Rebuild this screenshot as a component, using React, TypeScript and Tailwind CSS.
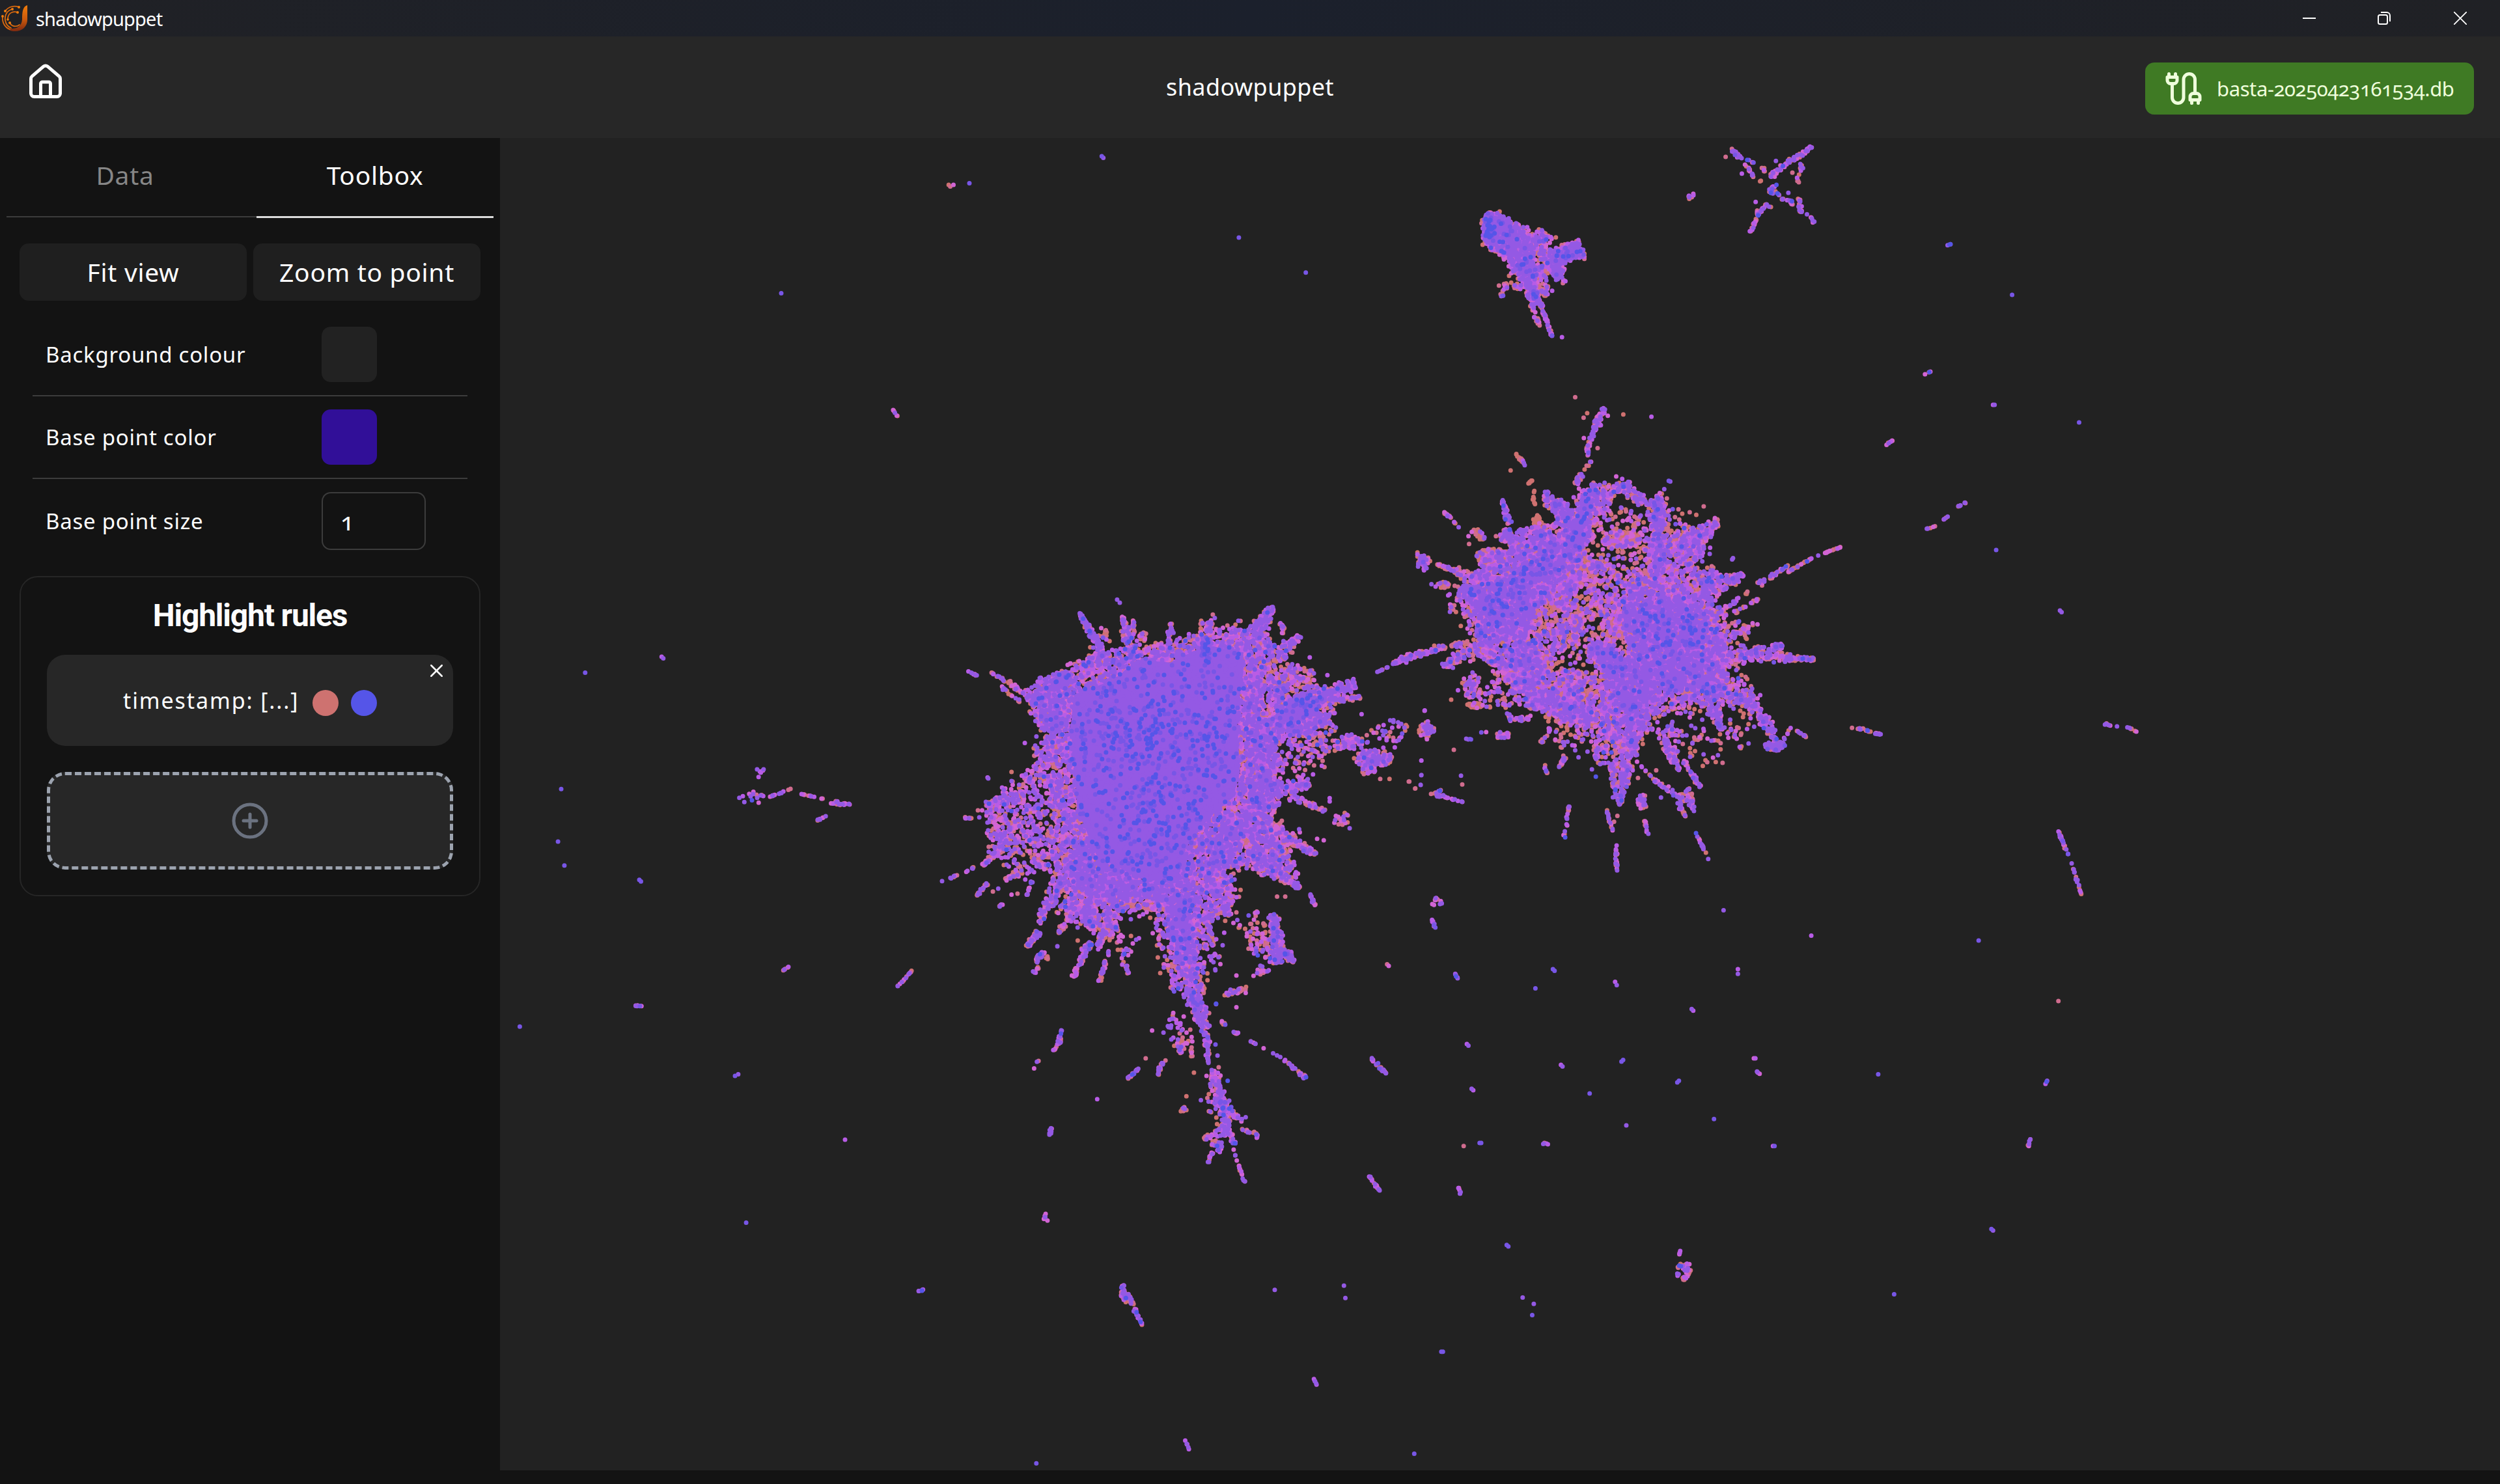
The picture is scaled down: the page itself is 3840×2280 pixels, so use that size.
import type { ReactNode } from "react";
import { House, CirclePlus, X } from "lucide-react";

/* ------------------------------------------------------------------ */
/* Embedding plot                                                      */
/* ------------------------------------------------------------------ */

const PLOT_X = 768;
const PLOT_Y = 212;
const PLOT_W = 3072;
const PLOT_H = 2047;

/** Timestamp ramp, oldest first; later layers are painted on top. */
const RAMP = ["#cf7170", "#d06c8e", "#d264d4", "#b85ce6", "#9459e4", "#7856e6", "#5555e8"];
const CUTS = [0.17, 0.38, 0.58, 0.75, 0.975, 0.988, 1];

/** x1, y1, x2, y2, half width at start, half width at end, density, bias */
type Streak = [number, number, number, number, number, number, number?, number?];
/** cx, cy, rx, ry, count, bias */
type Blob = [number, number, number, number, number, number?];
/** outline, count, jitter, bias */
type Region = [number[], number, number, number?];
/** x, y, layer */
type Dot = [number, number, number?];

interface Cluster {
  ox: number;
  oy: number;
  sx: number;
  sy: number;
  solids?: number[][];
  regions?: Region[];
  blobs?: Blob[];
  streaks?: Streak[];
  dots?: Dot[];
}

const CLUSTERS: Cluster[] = [
  {
    ox: 1420, oy: 880, sx: 1.96, sy: 2.6133,
    solids: [
      [450, 490, 570, 430, 640, 350, 740, 360, 850, 290, 960, 320, 960, 400, 940, 560, 950, 800, 930, 900, 860, 980, 790, 1090, 760, 1240, 640, 1220, 520, 1140, 460, 950, 450, 760, 440, 620],
      [1060, 560, 1150, 500, 1200, 570, 1080, 600],
    ],
    regions: [
      [[330, 500, 400, 420, 540, 320, 700, 310, 850, 250, 1000, 220, 1060, 300, 1050, 420, 1000, 540, 1180, 460, 1230, 600, 1060, 640, 1060, 800, 1060, 940, 960, 1000, 930, 1150, 810, 1220, 800, 1320, 700, 1330, 500, 1310, 400, 1200, 400, 900, 340, 760, 370, 640], 11500, 8],
      [[480, 460, 620, 400, 850, 360, 960, 420, 930, 700, 880, 980, 780, 1180, 560, 1180, 460, 900, 440, 640], 1700, 6, 7],
      [[460, 1080, 800, 1080, 800, 1310, 700, 1310, 520, 1290, 430, 1200], 1000, 6, 0.5],
      [[960, 480, 1060, 640, 1060, 940, 980, 960, 970, 700], 800, 6, -0.3],
      [[880, 980, 1040, 960, 1100, 1150, 1120, 1240, 960, 1170, 860, 1200], 1000, 6, -0.1],
      [[370, 780, 400, 1200, 280, 1200, 200, 1100, 190, 920, 290, 830], 560, 9, -0.05],
      [[400, 1200, 800, 1320, 720, 1380, 620, 1340, 560, 1450, 400, 1360], 620, 9, -0.1],
      [[800, 1200, 920, 1150, 940, 1320, 860, 1400, 800, 1400], 330, 8, -0.1],
      [[300, 480, 400, 420, 420, 640, 350, 620], 330, 6],
    ],
    blobs: [
      [845, 320, 15, 65, 70, 9], [1140, 530, 45, 45, 60, 9], [640, 640, 110, 130, 70, 40],
      [690, 930, 120, 120, 50, 40], [620, 340, 40, 60, 18, 20], [800, 700, 100, 120, 45, 40],
      [415, 425, 35, 30, 110, 1], [1110, 420, 70, 55, 110, -0.4], [1060, 460, 40, 50, 70, 0],
      [1180, 670, 100, 60, 110, -0.2], [1290, 680, 45, 35, 50, 0], [1350, 745, 60, 35, 150, -0.2],
      [1335, 790, 22, 22, 30, -0.4], [1410, 640, 50, 50, 22, 0], [1510, 635, 20, 42, 24, -0.3],
      [1130, 760, 80, 60, 50, 0], [1140, 840, 18, 28, 24, -0.2], [1255, 990, 24, 30, 18, -0.3],
      [700, 320, 40, 45, 60, -0.5], [910, 320, 30, 50, 60, -0.4], [545, 250, 25, 40, 12, -0.6],
      [650, 250, 22, 35, 16, -0.6], [1380, 670, 60, 60, 14, 0], [960, 1400, 60, 60, 10, 0],
      [1020, 1480, 40, 70, 34, -0.3], [720, 1450, 40, 70, 30, 0], [580, 1480, 70, 60, 34, 0],
      [990, 490, 30, 60, 60, -0.5], [870, 1500, 40, 60, 14, 0], [1075, 220, 10, 25, 14, -0.5],
      [1000, 1020, 50, 70, 90, -0.5], [400, 560, 30, 60, 60, -0.5], [400, 900, 20, 100, 60, -0.5],
    ],
    streaks: [
      [545, 340, 465, 160, 13, 3, 1.2, 1.5], [620, 310, 595, 172, 13, 4, 1.1], [740, 310, 740, 200, 9, 4, 1],
      [850, 300, 862, 190, 12, 7, 1.1], [832, 240, 834, 190, 4, 4, 1, -0.6], [990, 260, 1050, 135, 20, 5, 1.3, 0.6],
      [1060, 340, 1130, 255, 16, 6, 1.2], [630, 250, 628, 188, 4, 4, 0.8], [520, 330, 470, 390, 8, 8, 1],
      [350, 520, 200, 400, 9, 3, 0.6, -0.1], [130, 395, 158, 412, 3, 3, 1], [230, 460, 290, 520, 4, 4, 0.6, -0.2],
      [400, 440, 345, 430, 12, 6, 1, -0.1], [1060, 560, 1300, 445, 24, 9, 1.1, 0.8], [1180, 520, 1312, 500, 8, 6, 0.9],
      [1060, 630, 1220, 590, 20, 10, 1.2, 0.6], [1310, 430, 1410, 370, 2, 2, 0.3], [1410, 365, 1568, 293, 6, 7, 0.8],
      [1050, 870, 1160, 850, 18, 6, 1], [1100, 900, 1210, 955, 9, 5, 0.7], [1050, 1030, 1180, 1130, 16, 5, 1.1],
      [980, 1130, 1128, 1265, 22, 4, 1.1], [1160, 1290, 1176, 1335, 3, 3, 1], [850, 1200, 920, 1375, 20, 7, 0.9],
      [845, 1330, 862, 1460, 10, 4, 0.7], [760, 1290, 790, 1568, 24, 18, 1.4, 0.6], [410, 1230, 345, 1405, 16, 5, 0.9],
      [350, 1430, 308, 1500, 6, 5, 1], [490, 1300, 505, 1430, 24, 8, 1], [460, 1320, 405, 1450, 12, 4, 0.7],
      [560, 1340, 525, 1500, 12, 5, 0.7], [500, 1480, 468, 1568, 7, 5, 0.9, -0.4], [362, 1520, 335, 1560, 6, 5, 1],
      [250, 1070, 175, 1175, 11, 4, 0.8], [150, 1182, 125, 1200, 3, 3, 0.8, -0.5], [98, 1214, 50, 1240, 3, 3, 0.6],
      [200, 1232, 155, 1300, 4, 4, 1], [238, 1326, 225, 1340, 3, 3, 1], [322, 1240, 308, 1295, 4, 3, 1],
      [300, 900, 185, 925, 14, 7, 0.8, -0.1], [260, 1040, 190, 1060, 10, 6, 0.8], [300, 1200, 240, 1230, 9, 4, 0.8],
      [1048, 1370, 1068, 1568, 8, 15, 1.1], [1080, 1520, 1112, 1560, 8, 5, 1, 0.6], [120, 985, 142, 984, 4, 3, 1],
      [290, 810, 330, 840, 6, 6, 1], [335, 700, 345, 740, 7, 9, 1, -0.4], [1180, 650, 1100, 640, 8, 8, 0.8],
    ],
    dots: [
      [580, 108, 4], [588, 120, 4], [302, 683, 3], [192, 826, 4], [190, 822, 3], [262, 800, 0], [262, 836, 4],
      [165, 982, 4], [1213, 411, 3], [1160, 340, 3], [1506, 553, 3], [1316, 568, 3], [1496, 754, 3], [1496, 812, 4],
      [1494, 852, 4], [1458, 838, 1], [1477, 866, 1], [1372, 828, 1], [1400, 828, 0], [1525, 888, 1], [1548, 882, 4],
      [1552, 875, 6], [1562, 893, 4], [1220, 905, 3], [1220, 918, 3], [1280, 1026, 4], [1128, 1030, 4], [1130, 1042, 2],
      [1182, 1068, 2], [1202, 1074, 2], [1545, 1312, 1], [1552, 1330, 4], [1535, 1410, 4], [1538, 1424, 5], [874, 1530, 3],
      [868, 168, 1], [874, 182, 4], [400, 1500, 4], [262, 1292, 2], [280, 1288, 1], [206, 1280, 1], [222, 1268, 4],
    ],
  },
  {
    ox: 2150, oy: 580, sx: 2.178, sy: 2.0103,
    regions: [
      [[230, 620, 330, 560, 500, 540, 560, 450, 650, 340, 700, 380, 640, 470, 600, 580, 580, 690, 470, 720, 450, 800, 480, 950, 620, 1000, 690, 980, 700, 900, 780, 850, 730, 760, 760, 640, 830, 600, 840, 380, 880, 380, 890, 600, 900, 680, 1000, 700, 1060, 760, 1090, 900, 1090, 980, 1000, 1000, 860, 1030, 820, 1100, 770, 1150, 700, 1120, 640, 1060, 500, 1040, 420, 980, 300, 880, 220, 720], 6600, 8, -0.1],
      [[760, 720, 900, 680, 990, 740, 1040, 900, 1080, 970, 960, 960, 850, 960, 780, 1080, 690, 950, 690, 860, 770, 860], 2200, 6, 0.3],
      [[270, 650, 420, 570, 570, 550, 450, 700, 400, 800, 290, 780, 230, 680], 1000, 6, 0.3],
      [[640, 820, 720, 830, 730, 900, 690, 920, 640, 860], 260, 5, 0.6],
      [[400, 480, 480, 460, 560, 520, 480, 560, 340, 560], 420, 6, 0],
      [[900, 680, 1040, 640, 1090, 830, 1090, 900], 420, 8, -0.2],
    ],
    blobs: [
      [660, 700, 260, 320, 850, -0.3], [540, 770, 80, 80, 200, -0.4], [580, 950, 90, 50, 230, -0.4],
      [640, 650, 100, 100, 220, -0.3], [720, 770, 50, 40, 80, -0.6], [740, 500, 70, 26, 170, -0.7],
      [960, 520, 60, 60, 240, -0.2], [930, 630, 90, 70, 230, -0.3], [430, 900, 90, 80, 300, -0.3],
      [360, 490, 25, 22, 60, 0], [540, 410, 28, 35, 80, 0.5], [80, 572, 22, 24, 36, 0.8], [145, 640, 20, 10, 20, -0.7],
      [310, 552, 55, 25, 200, -0.75], [240, 950, 32, 40, 60, -0.2], [250, 1013, 28, 8, 36, -0.95], [90, 1090, 26, 22, 22, -0.3],
      [345, 1105, 26, 12, 26, 0], [1130, 1090, 60, 60, 30, -0.5], [1255, 1138, 34, 16, 60, 0.6], [812, 1310, 16, 24, 28, 0.4],
      [340, 980, 80, 50, 70, -0.2], [600, 1100, 100, 60, 60, -0.2], [960, 1080, 60, 60, 26, 0], [1020, 1150, 60, 50, 20, -0.3],
      [880, 740, 25, 25, 22, 20], [980, 760, 25, 35, 32, 20], [890, 810, 20, 20, 18, 20], [320, 710, 50, 50, 22, 20],
      [470, 590, 70, 50, 26, 20], [275, 790, 25, 14, 24, 8], [1030, 960, 26, 20, 22, 20], [970, 820, 18, 18, 12, 20],
      [230, 660, 30, 20, 34, 4], [550, 500, 80, 60, 150, -0.1], [900, 440, 60, 40, 24, -0.5], [1120, 800, 50, 50, 36, -0.3],
      [690, 1150, 50, 50, 50, -0.1], [470, 1000, 60, 30, 80, 0.2], [900, 1100, 40, 40, 30, 0.4], [780, 1060, 60, 60, 24, 6],
      [185, 680, 30, 45, 20, -0.2], [1130, 930, 60, 60, 26, -0.2], [860, 560, 200, 140, 130, -0.4],
      [450, 880, 60, 60, 160, -0.6], [560, 1040, 80, 40, 80, -0.3], [1080, 860, 20, 80, 60, -0.5],
    ],
    streaks: [
      [640, 350, 750, 335, 14, 14, 0.6, -0.1], [690, 380, 750, 330, 10, 7, 1.1], [750, 335, 815, 380, 13, 10, 1, 0], [800, 380, 870, 380, 7, 6, 0.8],
      [650, 345, 565, 560, 13, 18, 1.3, 0.4], [865, 365, 872, 600, 9, 14, 1.4, 0.4], [960, 520, 1068, 445, 20, 8, 1.2],
      [1000, 660, 1150, 610, 22, 6, 1.1, 0.3], [1060, 600, 1030, 640, 14, 16, 1, 0.4], [1060, 735, 1165, 660, 5, 4, 0.6, -0.2],
      [1080, 745, 1208, 680, 4, 4, 0.4, -0.4], [1100, 800, 1200, 758, 6, 5, 0.7], [1200, 640, 1300, 580, 6, 4, 0.9],
      [1300, 600, 1375, 560, 3, 3, 1.3, -0.6], [1378, 558, 1372, 562, 2, 2, 1, 0.5], [1420, 543, 1475, 523, 3, 3, 1.1],
      [1120, 860, 1280, 828, 12, 6, 1], [1140, 855, 1385, 870, 13, 4, 1.2], [1090, 870, 1150, 860, 12, 12, 0.7, -0.2],
      [1060, 960, 1200, 1010, 24, 15, 1.1], [1190, 1010, 1258, 1120, 11, 7, 1.2, 0.6], [1275, 1135, 1310, 1080, 4, 3, 0.6],
      [1325, 1090, 1366, 1112, 3, 3, 1], [1030, 980, 1080, 1090, 18, 5, 1.3, 0.5], [888, 1110, 905, 1190, 8, 5, 1.2, 0.4],
      [912, 1140, 935, 1215, 8, 4, 1], [948, 1185, 1010, 1270, 5, 4, 1, 0.3], [800, 1195, 850, 1240, 3, 3, 0.4, -0.3],
      [850, 1245, 960, 1310, 5, 6, 0.9], [965, 1270, 982, 1340, 9, 4, 0.9], [930, 1310, 960, 1365, 5, 4, 0.9],
      [990, 1403, 1035, 1490, 3, 3, 0.7, 0.4], [820, 1370, 828, 1410, 3, 5, 0.9], [770, 1110, 735, 1320, 22, 4, 1.3],
      [712, 1200, 725, 1310, 8, 6, 0.8, -0.1], [690, 1330, 712, 1400, 3, 3, 0.8], [724, 1440, 726, 1528, 3, 4, 0.9],
      [567, 1315, 550, 1420, 3, 4, 0.6], [558, 1165, 535, 1205, 5, 4, 1], [485, 1198, 495, 1222, 4, 4, 1], [505, 1080, 478, 1128, 4, 5, 0.7],
      [660, 1120, 665, 1195, 9, 7, 0.8], [365, 1055, 440, 1050, 6, 5, 0.8], [360, 1035, 375, 1060, 5, 5, 0.7],
      [230, 815, 110, 845, 8, 3, 0.7, -0.2], [110, 845, 0, 868, 5, 7, 0.8, 0.3], [300, 820, 145, 890, 18, 7, 1],
      [260, 620, 125, 578, 12, 3, 0.9, -0.2], [55, 540, 75, 560, 3, 6, 0.9], [245, 468, 285, 500, 7, 7, 1.3, -0.8],
      [145, 412, 172, 435, 4, 4, 1], [180, 448, 200, 464, 3, 3, 0.8, -0.5], [343, 378, 358, 430, 5, 6, 1.2, 1], [355, 430, 372, 450, 8, 7, 1],
      [460, 425, 465, 470, 8, 8, 1.3, -0.95], [487, 350, 492, 385, 7, 7, 1, 0.6], [500, 375, 600, 480, 12, 20, 0.7],
      [444, 315, 428, 330, 3, 3, 1, -0.9], [450, 345, 450, 392, 4, 4, 0.5, -0.9], [385, 235, 410, 258, 4, 4, 1.2, -0.85], [405, 250, 420, 274, 4, 3, 1.2, -0.7],
      [683, 95, 655, 150, 6, 7, 1.3], [655, 150, 638, 190, 6, 6, 1.3, 0.6], [635, 195, 625, 240, 5, 6, 0.8, -0.3],
      [640, 258, 612, 285, 4, 4, 0.5, -0.6], [608, 295, 588, 340, 6, 9, 0.9, -0.1], [655, 330, 650, 360, 12, 14, 1, 0.5],
      [105, 1285, 210, 1310, 4, 3, 0.7, 0.3], [120, 1283, 140, 1276, 5, 5, 1, 1.5], [220, 1115, 240, 1118, 4, 2, 0.8, 1],
      [490, 990, 640, 1060, 14, 18, 0.9], [420, 480, 400, 470, 8, 8, 1],
    ],
    dots: [
      [587, 61, 1], [748, 114, 0], [842, 121, 3], [905, 321, 4], [900, 319, 5], [885, 345, 4], [1017, 398, 1], [627, 110, 0], [615, 124, 1],
      [696, 118, 2], [616, 187, 2], [662, 218, 1], [371, 287, 0], [1115, 558, 4], [1112, 562, 4], [1037, 545, 4], [1400, 550, 4],
      [83, 1029, 2], [24, 1078, 0], [181, 1150, 1], [72, 1183, 3], [72, 1228, 4], [70, 1258, 4], [205, 1230, 4], [209, 1257, 1],
      [32, 1248, 1], [52, 1269, 1], [5, 1070, 4], [5, 1110, 3], [273, 1096, 5], [289, 1095, 2], [598, 1173, 4], [656, 1233, 6],
      [643, 1210, 4], [1513, 1082, 1], [1550, 1084, 1], [1560, 1090, 1], [797, 1237, 1], [858, 1213, 1], [728, 1354, 1], [717, 1372, 1],
      [1080, 1190, 1], [1048, 1174, 2], [172, 995, 0], [195, 966, 3], [168, 724, 4], [106, 638, 4], [120, 646, 3], [162, 673, 3],
      [582, 370, 3], [601, 371, 2], [230, 490, 2], [232, 514, 1], [322, 490, 1], [970, 416, 1], [992, 424, 0], [874, 1297, 4],
    ],
  },
  {
    ox: 1400, oy: 1350, sx: 2.24, sy: 2.178,
    blobs: [
      [880, 250, 45, 80, 36, 0], [1000, 180, 60, 60, 40, -0.1], [1040, 270, 30, 40, 10, 0], [1190, 200, 40, 70, 26, -0.3],
      [930, 490, 60, 50, 26, 0.2], [1200, 310, 30, 25, 16, 0.2], [1045, 740, 30, 60, 20, -0.2], [1050, 860, 30, 40, 22, 0],
      [730, 270, 20, 50, 10, 0], [1000, 330, 20, 60, 26, -0.5], [910, 350, 22, 30, 26, 0], [940, 550, 30, 20, 14, -0.2],
    ],
    streaks: [
      [925, 60, 930, 200, 28, 22, 1.5, 0.4], [930, 190, 960, 340, 22, 18, 1.4, 0.4], [950, 340, 1010, 500, 19, 9, 1.4, 0.6],
      [1010, 490, 1022, 620, 8, 4, 1, 0.2], [1035, 640, 1070, 760, 11, 10, 1.2, 0.6], [1070, 740, 1085, 860, 11, 10, 1.3, 0.6],
      [960, 380, 990, 470, 4, 4, 0.6, 8], [1060, 700, 1078, 810, 3, 3, 0.6, 9],
      [1100, 780, 1140, 820, 8, 5, 0.8], [1135, 835, 1195, 862, 3, 5, 0.9], [1095, 850, 1112, 890, 6, 6, 1], [1108, 905, 1120, 945, 2, 2, 0.5],
      [1126, 960, 1145, 1015, 3, 4, 0.9], [1065, 880, 1055, 920, 8, 5, 1.1], [1035, 915, 1020, 950, 4, 4, 1], [1015, 855, 1012, 875, 5, 5, 1],
      [1248, 120, 1262, 280, 7, 15, 1.2, 0.2], [1275, 240, 1318, 275, 10, 6, 1, 0.6], [1075, 385, 1155, 370, 5, 9, 0.9],
      [1065, 475, 1082, 492, 3, 3, 0.8, -0.3], [1108, 514, 1140, 524, 3, 3, 0.8, 0.2], [1165, 543, 1275, 600, 2, 2, 0.4, -0.1],
      [1280, 605, 1358, 668, 4, 4, 1, 0.2], [615, 210, 558, 330, 5, 5, 1.1, -0.1], [585, 235, 620, 230, 6, 4, 0.9, -0.7],
      [668, 275, 645, 345, 4, 5, 1.1], [650, 185, 642, 230, 5, 5, 1.2, 0.4], [450, 245, 425, 280, 5, 4, 1], [435, 295, 420, 318, 4, 4, 1, 0.5],
      [465, 262, 472, 268, 5, 5, 1, -0.7], [440, 180, 400, 222, 5, 6, 1], [740, 290, 745, 318, 3, 5, 0.9], [513, 505, 510, 545, 4, 5, 1, 0.7],
      [512, 545, 490, 575, 4, 4, 1.1, 0.1], [440, 608, 430, 614, 3, 2, 0.8], [790, 628, 745, 668, 3, 4, 1.2, 0.1], [862, 615, 848, 655, 4, 5, 1.1, 0.6],
      [965, 560, 962, 595, 3, 4, 1], [928, 555, 925, 585, 4, 5, 1], [950, 760, 928, 782, 5, 6, 1], [482, 830, 475, 858, 4, 4, 1, 0.7],
      [460, 1120, 458, 1142, 3, 4, 1, 0.6], [725, 1358, 742, 1410, 6, 8, 1.1, 1], [742, 1390, 795, 1495, 5, 3, 1.3, 0.3],
      [715, 1380, 738, 1420, 5, 4, 0.8, -0.6],
    ],
    dots: [
      [422, 635, 2], [639, 738, 3], [828, 508, 2], [806, 601, 1], [874, 608, 1], [882, 493, 4], [885, 497, 4], [867, 515, 4], [894, 538, 4],
      [902, 468, 3], [904, 559, 0], [972, 649, 0], [1048, 420, 4], [1048, 418, 6], [1118, 324, 2], [1118, 430, 2], [1088, 676, 6], [1046, 555, 5],
      [1053, 592, 4], [1057, 631, 1], [996, 741, 4], [1018, 734, 1], [946, 728, 0], [1150, 798, 4], [1488, 1362, 4], [1493, 1403, 4],
      [1250, 1376, 4], [36, 1378, 4], [36, 1379, 6], [468, 1144, 2], [1374, 60, 3], [1378, 78, 4], [1388, 88, 2], [1286, 60, 1], [1258, 60, 1],
      [1160, 123, 5], [1188, 110, 1], [1126, 164, 0], [1148, 168, 0], [1076, 181, 3], [572, 207, 0], [502, 226, 4], [678, 243, 3], [773, 204, 4],
    ],
  },
  {
    ox: 2200, oy: 200, sx: 2.45, sy: 3,
    regions: [
      [[195, 420, 210, 388, 245, 388, 340, 460, 370, 560, 380, 700, 405, 790, 375, 800, 335, 680, 270, 580, 205, 530], 1250, 4, 0.2],
      [[198, 410, 225, 400, 235, 470, 220, 510, 200, 490], 110, 2, 12],
      [[440, 560, 540, 520, 570, 570, 500, 610, 480, 690, 450, 660], 330, 3, 0.5],
      [[340, 470, 430, 480, 450, 560, 430, 700, 380, 700], 230, 5, -0.2],
    ],
    blobs: [[400, 490, 38, 26, 50, 0], [250, 450, 60, 60, 20, 6], [350, 620, 30, 50, 20, 8], [490, 570, 28, 22, 22, 8], [415, 740, 25, 35, 26, -0.1], [310, 470, 50, 40, 60, -0.5]],
    streaks: [
      [385, 700, 392, 800, 8, 7, 1.3, 0.5], [370, 800, 400, 895, 5, 4, 1, -0.3], [408, 800, 450, 950, 5, 3, 1.3, 0.4], [545, 505, 550, 580, 5, 6, 1.1],
      [570, 570, 580, 590, 5, 5, 1, 0.6], [340, 720, 305, 720, 7, 4, 1, -0.5], [465, 620, 470, 690, 8, 5, 1.2, 0.5], [495, 690, 500, 705, 5, 5, 1, 0.5],
      [300, 640, 318, 680, 3, 3, 0.7, -0.5], [285, 710, 252, 775, 6, 4, 0.8, -0.4], [1125, 85, 1165, 135, 5, 5, 1.1, 0.4], [1190, 140, 1210, 150, 4, 3, 0.8],
      [1178, 155, 1208, 215, 4, 3, 1], [1430, 75, 1355, 140, 4, 6, 1.2, 0.4], [1355, 135, 1290, 195, 6, 5, 1.1], [1285, 195, 1275, 230, 8, 5, 1, -0.1],
      [1385, 150, 1385, 175, 4, 3, 0.8], [1290, 240, 1275, 290, 6, 6, 1, 0.3], [1290, 280, 1306, 302, 3, 3, 0.9], [1240, 168, 1252, 190, 4, 4, 1, -0.7],
      [1235, 228, 1232, 242, 3, 3, 1, -0.9], [1315, 318, 1345, 325, 3, 4, 0.9, -0.3], [1350, 320, 1355, 350, 5, 4, 0.9], [1380, 315, 1388, 380, 4, 5, 1.1, 0.2],
      [1425, 400, 1437, 425, 3, 4, 1], [1250, 340, 1275, 355, 3, 3, 1], [1250, 350, 1225, 395, 4, 4, 1.1], [1222, 360, 1224, 390, 3, 3, 0.7],
      [1220, 410, 1198, 472, 3, 4, 1.1, 0], [963, 310, 992, 295, 4, 4, 0.9, 0], [1372, 220, 1380, 250, 3, 3, 0.9],
    ],
    dots: [
      [1104, 123, 1], [1165, 200, 3], [1185, 137, 6], [1293, 142, 4], [1355, 196, 1], [1380, 205, 0], [1395, 175, 4], [1387, 187, 3], [1217, 331, 3],
      [1340, 289, 4], [1410, 388, 4], [488, 954, 3], [451, 740, 3], [434, 756, 3], [251, 716, 1], [270, 709, 1], [297, 703, 0], [289, 671, 0], [404, 900, 1], [465, 494, 0],
    ],
  },
  {
    ox: 0, oy: 0, sx: 1 / 2.449, sy: 1 / 2.449,
    blobs: [[1056, 797, 5, 6, 34, 0.4], [477, 484, 4, 4, 6, 0.8], [472, 500, 9, 4, 14, 0.4], [902, 566, 4, 3, 8, 0.5]],
    streaks: [
      [483, 500, 496, 495, 3, 3, 0.7, 0.3], [502, 498, 534, 505, 2, 3, 0.6, 0.1], [520, 504, 533, 505, 3, 3, 0.8, 0.4], [512, 515, 518, 512, 3, 2, 0.9],
      [563, 619, 572, 609, 3, 3, 0.9, 0], [1290, 519, 1297, 536, 3, 3, 1.1, 0.5], [1299, 541, 1306, 563, 3, 3, 0.6, -0.1],
      [1162, 456, 1180, 461, 3, 3, 0.9, -0.3], [1320, 454, 1328, 456, 3, 3, 0.6, 0.4], [1334, 456, 1340, 459, 3, 2, 0.9, 0],
      [1208, 332, 1214, 330, 3, 2, 0.8, 0.4], [1228, 318, 1233, 315, 3, 3, 1, 0], [1219, 326, 1223, 323, 2, 2, 0.7, 0.3],
      [859, 738, 866, 748, 3, 4, 1, 0.3], [860, 664, 870, 674, 4, 4, 1, 0.5], [1183, 279, 1187, 276, 3, 3, 1, 0.3],
      [560, 257, 563, 261, 2, 3, 1, 0.5], [491, 609, 495, 606, 2, 3, 1, 1], [1272, 719, 1274, 713, 3, 2, 1, 0.3], [1282, 681, 1284, 678, 3, 2, 1, 0.3],
      [898, 577, 900, 582, 3, 3, 1, 1.5], [912, 610, 915, 615, 3, 2, 0.9, 0.5], [824, 865, 826, 869, 2, 3, 1, 0.8], [743, 903, 746, 909, 2, 3, 0.8, 1],
      [398, 631, 403, 631, 3, 3, 1, 1.5], [1207, 235, 1211, 233, 2, 2, 0.9, 0.5], [1221, 154, 1224, 153, 2, 2, 1, 0.5],
      [1053, 788, 1054, 784, 2, 2, 0.9, -0.2], [967, 717, 971, 718, 3, 3, 0.9, 1], [915, 745, 916, 749, 3, 3, 1, 1],
      [576, 810, 579, 809, 2, 2, 1, 1.5], [1102, 672, 1104, 674, 3, 2, 1, 0.5],
    ],
    dots: [
      [691, 98, 5], [692, 99, 4], [595, 116, 0], [598, 116, 2], [596, 117, 1], [608, 115, 5], [777, 149, 5], [819, 171, 5], [490, 184, 5], [1262, 185, 5],
      [1250, 254, 3], [1251, 254, 4], [1304, 265, 5], [1252, 345, 5], [1292, 383, 4], [1293, 384, 4], [415, 412, 3], [416, 413, 4], [367, 422, 5],
      [352, 495, 5], [350, 528, 5], [354, 543, 5], [401, 552, 5], [402, 553, 5], [326, 644, 5], [461, 675, 5], [463, 674, 4], [530, 715, 3],
      [468, 767, 5], [650, 918, 5], [887, 912, 5], [905, 848, 5], [904, 848, 5], [1081, 571, 4], [1136, 587, 3], [1241, 590, 5], [1291, 628, 1],
      [870, 605, 1], [871, 606, 2], [974, 608, 5], [975, 609, 5], [963, 620, 5], [1013, 616, 3], [1014, 618, 4], [1061, 633, 4], [1062, 634, 3],
      [1090, 608, 3], [1090, 611, 4], [920, 655, 3], [921, 656, 4], [979, 668, 3], [980, 669, 4], [1018, 665, 5], [1017, 666, 5], [997, 686, 5],
      [1053, 678, 5], [1052, 679, 5], [1100, 664, 2], [1101, 664, 3], [923, 683, 4], [924, 684, 3], [1020, 706, 4], [1075, 702, 5], [928, 717, 5],
      [929, 717, 5], [918, 719, 1], [1112, 719, 3], [1113, 719, 5], [1178, 674, 5], [1249, 771, 5], [1250, 772, 4], [1188, 812, 5], [945, 781, 5],
      [946, 782, 5], [955, 814, 4], [962, 818, 4], [961, 825, 5], [1054, 793, 0], [1060, 797, 1], [1052, 799, 4],
    ],
  },
];

/** Small seeded generator so that the plot is stable between renders. */
function seeded(seed: number) {
  let a = seed;
  return () => {
    a = (a + 0x6d2b79f5) | 0;
    let t = Math.imul(a ^ (a >>> 15), 1 | a);
    t = (t + Math.imul(t ^ (t >>> 7), 61 | t)) ^ t;
    return ((t ^ (t >>> 14)) >>> 0) / 4294967296;
  };
}

function inside(poly: number[], x: number, y: number) {
  let hit = false;
  for (let i = 0, j = poly.length - 2; i < poly.length; j = i, i += 2) {
    const xi = poly[i], yi = poly[i + 1], xj = poly[j], yj = poly[j + 1];
    if (yi > y !== yj > y && x < ((xj - xi) * (y - yi)) / (yj - yi) + xi) hit = !hit;
  }
  return hit;
}

function buildPlot() {
  const rand = seeded(20250423);
  const gauss = () => rand() + rand() + rand() - 1.5;
  const layers: string[][] = RAMP.map(() => []);
  const solids: string[] = [];

  const layerFor = (bias: number) => {
    const t = Math.pow(rand(), 1 / (1 + bias));
    const i = CUTS.findIndex((c) => t <= c);
    return i < 0 ? RAMP.length - 1 : i;
  };
  const put = (x: number, y: number, layer: number) => {
    layers[layer].push(`M${(x - PLOT_X).toFixed(1)} ${(y - PLOT_Y).toFixed(1)}h0`);
  };

  for (const c of CLUSTERS) {
    const X0 = (x: number) => c.ox + x / c.sx;
    const Y0 = (y: number) => c.oy + y / c.sy;
    for (const poly of c.solids ?? []) {
      const pts: string[] = [];
      for (let i = 0; i < poly.length; i += 2) pts.push(`${(X0(poly[i]) - PLOT_X).toFixed(1)} ${(Y0(poly[i + 1]) - PLOT_Y).toFixed(1)}`);
      solids.push(`M${pts.join("L")}Z`);
    }
    for (const [poly, count, jitter, bias = 0] of c.regions ?? []) {
      const xs = poly.filter((_, i) => i % 2 === 0);
      const ys = poly.filter((_, i) => i % 2 === 1);
      const x0 = Math.min(...xs), x1 = Math.max(...xs), y0 = Math.min(...ys), y1 = Math.max(...ys);
      let left = count;
      while (left > 0) {
        const x = x0 + rand() * (x1 - x0), y = y0 + rand() * (y1 - y0);
        if (!inside(poly, x, y)) continue;
        put(X0(x) + gauss() * jitter * 1.6, Y0(y) + gauss() * jitter * 1.6, layerFor(bias));
        left--;
      }
    }
    for (const [cx, cy, rx, ry, count, bias = 0] of c.blobs ?? []) {
      for (let i = 0; i < count; i++) {
        const a = rand() * Math.PI * 2, r = Math.pow(rand(), 0.6);
        put(X0(cx + Math.cos(a) * r * rx), Y0(cy + Math.sin(a) * r * ry), layerFor(bias));
      }
    }
    for (const [ax, ay, bx, by, w1, w2, density = 1, bias = 0] of c.streaks ?? []) {
      const x1 = X0(ax), y1 = Y0(ay), x2 = X0(bx), y2 = Y0(by);
      const len = Math.hypot(x2 - x1, y2 - y1) || 1;
      const nx = -(y2 - y1) / len, ny = (x2 - x1) / len;
      const count = Math.ceil((len * (3 + w1 + w2) * density) / 18);
      for (let i = 0; i < count; i++) {
        const t = rand();
        const off = gauss() * 1.05 * Math.max(0, w1 + (w2 - w1) * t - 2);
        put(x1 + (x2 - x1) * t + nx * off, y1 + (y2 - y1) * t + ny * off, layerFor(bias));
      }
    }
    for (const [x, y, layer = 4] of c.dots ?? []) put(X0(x), Y0(y), layer);
  }
  return { layers: layers.map((l) => l.join("")), solid: solids.join("") };
}

const PLOT = buildPlot();

function EmbeddingPlot() {
  return (
    <svg className="block h-full w-full" viewBox={`0 0 ${PLOT_W} ${PLOT_H}`} fill="none" strokeLinecap="round" strokeWidth={7}>
      {RAMP.map((color, i) => (
        <g key={color}>
          {i === 4 && <path d={PLOT.solid} fill={color} />}
          <path d={PLOT.layers[i]} stroke={color} />
        </g>
      ))}
    </svg>
  );
}

/* ------------------------------------------------------------------ */
/* Icons                                                               */
/* ------------------------------------------------------------------ */

function AppLogo() {
  return (
    <svg className="size-10" viewBox="0 0 40 40" fill="none">
      <defs>
        <linearGradient id="ember" x1="0" y1="0" x2="0" y2="1">
          <stop offset="0" stopColor="#f07c0c" />
          <stop offset="0.55" stopColor="#c9580c" />
          <stop offset="1" stopColor="#7e2a10" />
        </linearGradient>
      </defs>
      <path d="M40 0v22c0 11-8 18-19 18-6 0-11-2-14-6 9 4 24 3 25-12C32 10 33 2 40 0Z" fill="url(#ember)" />
      <g stroke="#d9690f" strokeWidth="1.8" strokeLinecap="round">
        <path d="M6 9C11 2 20 0 27 3" />
        <path d="M17 6C9 8 5 15 6 23c1 6 4 10 9 12" />
        <path d="M25 11c-8-3-15 2-15 10" />
        <path d="M2 17c-1 9 3 17 11 20" />
        <path d="M13 27c3 6 10 7 15 3" />
      </g>
      <g fill="#f07c0c">
        <circle cx="6" cy="9" r="2" />
        <circle cx="27" cy="3" r="2" />
        <circle cx="17" cy="6" r="2" />
        <circle cx="25" cy="11" r="2" />
        <circle cx="2" cy="17" r="2" />
        <circle cx="10" cy="22" r="1.8" />
        <circle cx="13" cy="27" r="2" />
      </g>
    </svg>
  );
}

function CableIcon() {
  return (
    <svg className="size-[60px]" viewBox="0 0 24 24" fill="none" stroke="currentColor" strokeWidth="2" strokeLinecap="round" strokeLinejoin="round">
      <path d="M4 9a2 2 0 0 1-2-2V5h6v2a2 2 0 0 1-2 2Z" />
      <path d="M3 5V3" />
      <path d="M7 5V3" />
      <path d="M19 15V6.5a3.5 3.5 0 0 0-7 0v11a3.5 3.5 0 0 1-7 0V9" />
      <path d="M17 21v-2" />
      <path d="M21 21v-2" />
      <path d="M22 19h-6v-2a2 2 0 0 1 2-2h2a2 2 0 0 1 2 2Z" />
    </svg>
  );
}

/* ------------------------------------------------------------------ */
/* Chrome                                                              */
/* ------------------------------------------------------------------ */

function TitleBar() {
  return (
    <div className="flex h-14 items-center justify-between bg-linear-to-r from-[#202125] via-[#1b202c] to-[#202125]">
      <div className="flex items-center pl-0.5">
        <AppLogo />
        <span className="mt-0.5 ml-[13px] text-[29px] leading-[40px] tracking-[-0.8px] text-white">shadowpuppet</span>
      </div>
      <div className="flex items-center gap-[95px] pr-[51px] text-white">
        <svg className="size-5" viewBox="0 0 20 20" stroke="currentColor" strokeWidth="2">
          <path d="M0 10h20" />
        </svg>
        <svg className="size-5" viewBox="0 0 20 20" fill="none" stroke="currentColor" strokeWidth="2">
          <rect x="1" y="5" width="14" height="14" rx="2.5" />
          <path d="M5 1h9a5 5 0 0 1 5 5v9" />
        </svg>
        <svg className="ml-0.5 size-5" viewBox="0 0 20 20" stroke="currentColor" strokeWidth="1.8">
          <path d="M0 0l20 20M20 0L0 20" />
        </svg>
      </div>
    </div>
  );
}

function Header() {
  return (
    <header className="grid h-[156px] grid-cols-3 items-center bg-[#272727]">
      <div className="-mt-4 pl-10">
        <House className="size-[60px] text-white" strokeWidth={2} />
      </div>
      <h1 className="text-center text-[36px] leading-[48px] tracking-[0.4px] text-white">shadowpuppet</h1>
      <button className="mt-1 mr-10 flex h-20 w-[505px] items-center justify-self-end rounded-[14px] bg-[#3f7a24] pl-[29px] text-[#efffdc]">
        <CableIcon />
        <span className="ml-[21px] text-[31px] leading-none tracking-[-0.4px] whitespace-nowrap oldstyle-nums">basta-20250423161534.db</span>
      </button>
    </header>
  );
}

/* ------------------------------------------------------------------ */
/* Sidebar                                                             */
/* ------------------------------------------------------------------ */

function Setting({ label, children, last }: { label: string; children: ReactNode; last?: boolean }) {
  return (
    <div className={last ? "flex items-start py-5 pl-5" : "flex items-start border-b-2 border-[#3c3c3c] py-5 pl-5"}>
      <span className={last ? "w-[424px] pt-[22px] text-[33px] leading-[46px] tracking-[0.75px] text-white" : "w-[424px] pt-5 text-[33px] leading-[46px] tracking-[0.75px] text-white"}>
        {label}
      </span>
      {children}
    </div>
  );
}

function Sidebar() {
  return (
    <aside className="w-[768px] shrink-0">
      <div className="mx-2.5 flex h-[123px] text-[39px] leading-[52px] tracking-[0.7px]">
        <div className="flex h-[122px] w-[384px] justify-center border-b-2 border-[#3c3c3c] pt-[31px] pr-5 text-[#868686]">Data</div>
        <div className="flex w-[364px] justify-center border-b-3 border-[#dcdcdc] pt-[31px] text-white">Toolbox</div>
      </div>

      <div className="mx-[30px] mt-[39px] flex gap-2.5 text-[39px] tracking-[0.7px] text-white">
        <button className="h-[88px] flex-1 rounded-[14px] bg-[#1f1f1f]">Fit view</button>
        <button className="h-[88px] flex-1 rounded-[14px] bg-[#1f1f1f]">Zoom to point</button>
      </div>

      <div className="mx-[50px] mt-5">
        <Setting label="Background colour">
          <div className="size-[85px] rounded-[14px] bg-[#222222]" />
        </Setting>
        <Setting label="Base point color">
          <div className="size-[85px] rounded-[14px] bg-[#310f98]" />
        </Setting>
        <Setting label="Base point size" last>
          <div className="flex h-[89px] w-[160px] items-center rounded-[14px] border-2 border-[#3c3c3c] pl-[27px] text-[38px] text-white oldstyle-nums">1</div>
        </Setting>
      </div>

      <section className="mx-[30px] mt-5 h-[492px] rounded-[28px] border-2 border-[#262626] px-10">
        <h2 className="mt-7 text-center font-[Roboto] text-[48px] leading-[62px] font-bold tracking-[-1.2px] text-[#fdfdfd]">Highlight rules</h2>
        <div className="relative mt-[29px] flex h-[140px] items-center rounded-[28px] bg-[#272727] pl-[117px] text-white">
          <span className="w-[291px] text-[34px] tracking-[1.9px] whitespace-nowrap">timestamp: [...]</span>
          <span className="mt-2 size-10 rounded-full bg-[#ce7270]" />
          <span className="mt-2 ml-[19px] size-10 rounded-full bg-[#5555e8]" />
          <X className="absolute top-[8px] right-[9px] size-[33px]" strokeWidth={1.8} />
        </div>
        <div className="mt-10 flex h-[150px] items-center justify-center rounded-[28px] border-5 border-dashed border-[#9ca3af] bg-[#272727]">
          <CirclePlus className="size-[60px] text-[#6b7280]" strokeWidth={2} />
        </div>
      </section>
    </aside>
  );
}

export default function App() {
  return (
    <div className="flex h-[2280px] w-[3840px] flex-col overflow-hidden bg-[#131313] font-['Noto_Sans','Open_Sans',sans-serif]">
      <TitleBar />
      <Header />
      <div className="flex h-[2047px]">
        <Sidebar />
        <main className="h-full flex-1 bg-[#222222]">
          <EmbeddingPlot />
        </main>
      </div>
    </div>
  );
}
